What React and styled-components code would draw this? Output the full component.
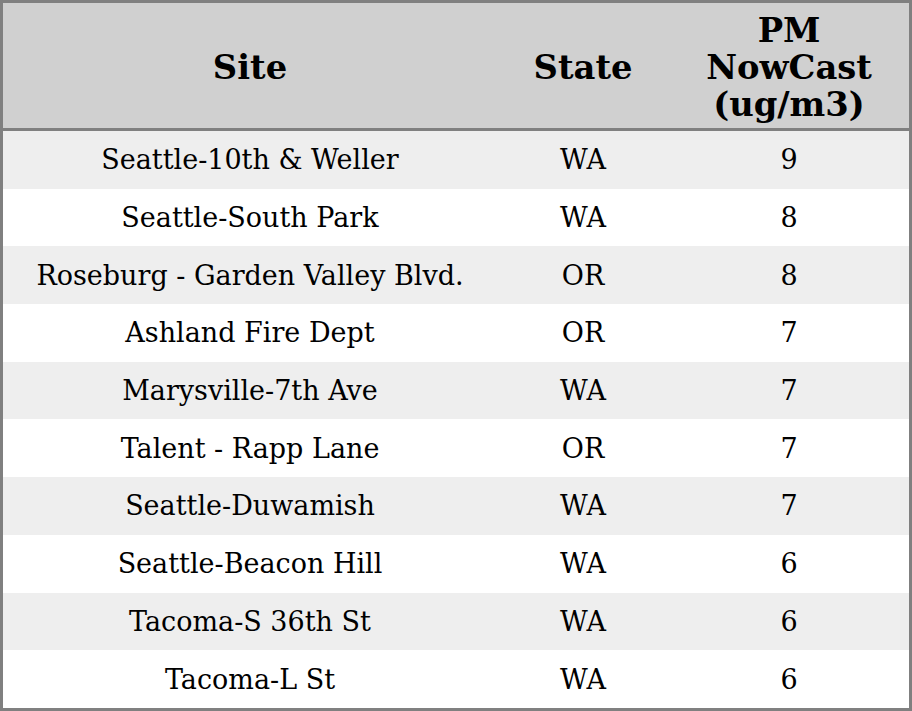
import styled, { createGlobalStyle } from "styled-components";

const GlobalStyle = createGlobalStyle`
  html, body {
    margin: 0;
    padding: 0;
    background: #ffffff;
  }
`;

const rows = [
  ["Seattle-10th & Weller", "WA", "9"],
  ["Seattle-South Park", "WA", "8"],
  ["Roseburg - Garden Valley Blvd.", "OR", "8"],
  ["Ashland Fire Dept", "OR", "7"],
  ["Marysville-7th Ave", "WA", "7"],
  ["Talent - Rapp Lane", "OR", "7"],
  ["Seattle-Duwamish", "WA", "7"],
  ["Seattle-Beacon Hill", "WA", "6"],
  ["Tacoma-S 36th St", "WA", "6"],
  ["Tacoma-L St", "WA", "6"],
];

const Table = styled.table`
  box-sizing: border-box;
  width: 912px;
  table-layout: fixed;
  border-collapse: separate;
  border-spacing: 0;
  border: 3px solid #808080;
  font-family: "DejaVu Serif", "Liberation Serif", serif;
  color: #000;
`;

const HeadCell = styled.th`
  background: #d0d0d0;
  border-bottom: 3px solid #808080;
  height: 122px;
  padding: 3px 4px 0;
  font-size: 33.75px;
  font-weight: bold;
  line-height: 37px;
  text-align: center;
  vertical-align: middle;
`;

const Row = styled.tr`
  background: ${(p) => (p.$shaded ? "#eeeeee" : "#ffffff")};
`;

const Cell = styled.td`
  height: 57.7px;
  padding: 0 4px;
  font-size: 27px;
  line-height: normal;
  text-align: center;
  vertical-align: middle;
  white-space: nowrap;
`;

export default function App() {
  return (
    <>
      <GlobalStyle />
      <Table>
        <colgroup>
          <col style={{ width: "494px" }} />
          <col style={{ width: "172px" }} />
          <col style={{ width: "240px" }} />
        </colgroup>
        <thead>
          <tr>
            <HeadCell>Site</HeadCell>
            <HeadCell>State</HeadCell>
            <HeadCell>
              PM
              <br />
              NowCast
              <br />
              (ug/m3)
            </HeadCell>
          </tr>
        </thead>
        <tbody>
          {rows.map(([site, state, value], i) => (
            <Row key={site} $shaded={i % 2 === 0}>
              <Cell>{site}</Cell>
              <Cell>{state}</Cell>
              <Cell>{value}</Cell>
            </Row>
          ))}
        </tbody>
      </Table>
    </>
  );
}
